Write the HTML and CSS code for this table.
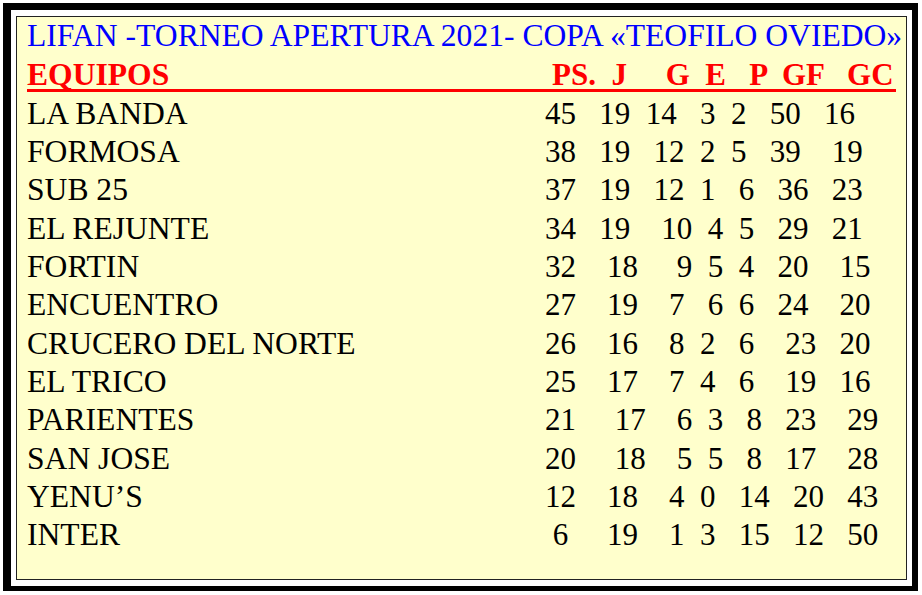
FILE: index.html
```html
<!DOCTYPE html>
<html lang="es">
<head>
<meta charset="utf-8">
<title>LIFAN - Torneo Apertura 2021</title>
<link rel="stylesheet" href="styles.css">
</head>
<body>
<div class="frame">
  <div class="card">
    <div class="title">LIFAN -TORNEO APERTURA 2021- COPA «TEOFILO OVIEDO»</div>
    <div class="hdr"><span class="hname">EQUIPOS</span><span class="nums">PS.  J     G  E   P  GF   GC</span></div>
    <div class="rows">
      <div class="row"><span class="name">LA BANDA</span><span class="nums">45   19  14   3  2   50   16</span></div>
      <div class="row"><span class="name">FORMOSA</span><span class="nums">38   19   12  2  5   39    19</span></div>
      <div class="row"><span class="name">SUB 25</span><span class="nums">37   19   12  1   6   36   23</span></div>
      <div class="row"><span class="name">EL REJUNTE</span><span class="nums">34   19    10  4  5   29   21</span></div>
      <div class="row"><span class="name">FORTIN</span><span class="nums">32    18     9  5  4   20    15</span></div>
      <div class="row"><span class="name">ENCUENTRO</span><span class="nums">27    19    7   6  6   24    20</span></div>
      <div class="row"><span class="name">CRUCERO DEL NORTE</span><span class="nums">26    16    8  2   6    23   20</span></div>
      <div class="row"><span class="name">EL TRICO</span><span class="nums">25    17    7  4   6    19   16</span></div>
      <div class="row"><span class="name">PARIENTES</span><span class="nums">21     17    6  3   8   23    29</span></div>
      <div class="row"><span class="name">SAN JOSE</span><span class="nums">20     18    5  5   8   17    28</span></div>
      <div class="row"><span class="name">YENU’S</span><span class="nums">12    18    4  0   14   20   43</span></div>
      <div class="row"><span class="name">INTER</span><span class="nums"> 6     19    1  3   15   12   50</span></div>
    </div>
  </div>
</div>
</body>
</html>
```
FILE: styles.css
```css
html, body {
  margin: 0;
  padding: 0;
  background: #ffffff;
}

body {
  font-family: "Liberation Serif", "Times New Roman", serif;
  font-size: 31.6px;
  color: #000;
}

.frame {
  margin: 3px 4px 4px 3px;
  border-style: solid;
  border-color: #000;
  border-width: 7px 6px 5px 8px;
  padding: 6px 5px 6px 5px;
  background: #fff;
}

.card {
  border: 1px solid #222;
  background: #ffffcc;
  height: 562px;
  padding: 0 0 0 10px;
  box-sizing: content-box;
  overflow: hidden;
}

.title {
  color: #0000ff;
  line-height: 38.4px;
  white-space: nowrap;
}

.hdr {
  display: flex;
  margin-top: 4.6px;
  width: 869px;
  height: 29px;
  line-height: 29px;
  color: #ff0000;
  font-weight: bold;
  border-bottom: 3px solid #ff0000;
}

.hname {
  width: 525px;
  flex: none;
}

.nums {
  white-space: pre;
  font-size: 31px;
}

.rows {
  margin-top: 2.5px;
}

.row {
  display: flex;
  line-height: 38.34px;
  white-space: nowrap;
}

.name {
  width: 518px;
  flex: none;
}
```
